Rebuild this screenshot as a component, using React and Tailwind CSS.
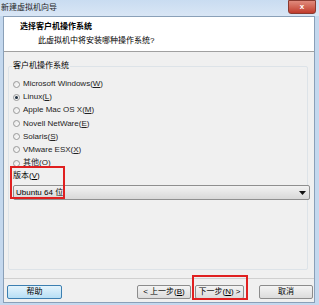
import React from "react";

const font = { fontFamily: '"Liberation Sans", "Noto Sans CJK SC", sans-serif' };

const osList = [
  ["Microsoft Windows", "W"],
  ["Linux", "L"],
  ["Apple Mac OS X", "M"],
  ["Novell NetWare", "E"],
  ["Solaris", "S"],
  ["VMware ESX", "X"],
  ["其他", "O"],
];

function Radio({ checked }) {
  return (
    <span className="w-[7px] h-[7px] rounded-full border border-[#9a9a9a] bg-gradient-to-br from-[#e6e6e6] to-[#fdfdfd] flex items-center justify-center shrink-0">
      {checked && <span className="w-[3px] h-[3px] rounded-full bg-[#1f2f3f]" />}
    </span>
  );
}

function Btn({ children, focus }) {
  return (
    <div
      className={
        "h-[14px] flex items-center justify-center rounded-[2px] border text-[8px] leading-none " +
        (focus
          ? "border-[#3c7fb1] bg-gradient-to-b from-[#e5f4fc] to-[#b7dff5]"
          : "border-[#8c8c8c] bg-gradient-to-b from-[#f4f4f4] to-[#dcdcdc]")
      }
    >
      {children}
    </div>
  );
}

export default function App() {
  return (
    <div className="w-[319px] h-[305px] bg-[#c4d8ee] flex flex-col text-black relative" style={font}>
      {/* title bar */}
      <div className="h-[16px] flex items-start justify-between bg-gradient-to-b from-[#c9dcf1] to-[#d9e6f5]">
        <div className="text-[8px] leading-none pt-[4px] pl-[1px] text-[#1e1e1e]">新建虚拟机向导</div>
        <div className="w-[28px] h-[14px] mr-[3px] rounded-b-[3px] bg-gradient-to-b from-[#e08a7c] to-[#c0392b] border border-[#8a3a30] flex items-center justify-center text-white text-[8px] font-bold leading-none">
          x
        </div>
      </div>

      {/* client area */}
      <div className="flex-1 ml-[3px] mr-[4px] mb-[2px] bg-[#f0f0f0] border border-[#8aa0b8] flex flex-col">
        <div className="h-[35px] shrink-0 bg-white border-b border-[#a0a0a0] pl-[16px] pt-[6px] flex flex-col gap-[6px]">
          <div className="text-[8px] font-bold leading-none">选择客户机操作系统</div>
          <div className="text-[8px] leading-none pl-[18px]">此虚拟机中将安装哪种操作系统?</div>
        </div>

        <div className="flex-1 flex flex-col px-[4px] pt-[14px] pb-[8px]">
          {/* group box */}
          <div className="relative flex-1 border border-[#dde3e8] rounded-[2px] mr-[2px] pt-[13px] pl-[4px] flex flex-col">
            <div className="absolute -top-[5px] left-[3px] bg-[#f0f0f0] px-[1px] text-[8px] leading-none">客户机操作系统</div>
            <div className="flex flex-col gap-[5.2px]">
              {osList.map(([name, key], i) => (
                <div key={key} className="flex items-center gap-[3px] h-[8px] text-[8px] leading-none text-[#222]">
                  <Radio checked={i === 1} />
                  <span>
                    {name}(<span className="underline">{key}</span>)
                  </span>
                </div>
              ))}
            </div>

            <div className="text-[8px] leading-none mt-[5px]">
              版本(<span className="underline">V</span>)
            </div>
            <div className="mt-[5px] mr-[-3px] h-[15px] border border-[#8f8f8f] rounded-[2px] bg-gradient-to-b from-[#f2f2f2] to-[#d8d8d8] flex items-center justify-between px-[2px]">
              <span className="text-[8px] leading-none">Ubuntu 64 位</span>
              <svg width="7" height="4" viewBox="0 0 7 4" className="mr-[1px]">
                <path d="M0 0 H7 L3.5 4 Z" fill="#111" />
              </svg>
            </div>
          </div>
        </div>

        <div className="h-[24px] shrink-0 border-t border-[#d0d0d0] flex items-start px-[3px] pt-[6px]">
          <div className="w-[55px]">
            <Btn focus>帮助</Btn>
          </div>
          <div className="flex-1" />
          <div className="w-[54px]">
            <Btn>&lt; 上一步(<span className="underline">B</span>)</Btn>
          </div>
          <div className="w-[49px] ml-[4px]">
            <Btn>下一步(<span className="underline">N</span>) &gt;</Btn>
          </div>
          <div className="w-[54px] ml-[15px] mr-[-2px]">
            <Btn>取消</Btn>
          </div>
        </div>
      </div>

      {/* red annotation boxes */}
      <div className="absolute left-[10px] top-[166px] w-[55px] h-[33px] border-2 border-[#e02020]" />
      <div className="absolute left-[192px] top-[275px] w-[56px] h-[25px] border-2 border-[#e02020]" />
    </div>
  );
}
